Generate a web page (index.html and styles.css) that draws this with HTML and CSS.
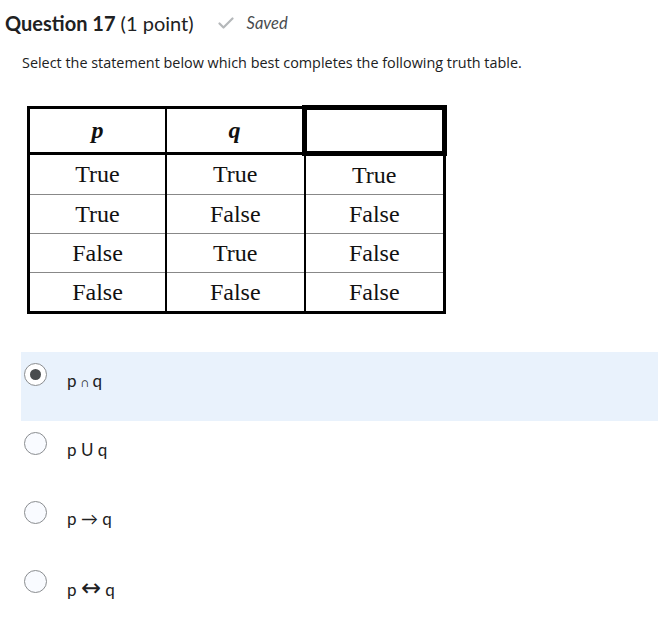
FILE: index.html
```html
<!DOCTYPE html>
<html lang="en">
<head>
<meta charset="utf-8">
<title>Question 17</title>
<link rel="stylesheet" href="styles.css">
</head>
<body>
<div class="page">
  <header class="qhead">
    <h1 class="qtitle"><span class="qnum">Question 17</span> <span class="qpts">(1 point)</span></h1>
    <span class="saved">
      <svg class="check" width="16" height="12" viewBox="0 0 16 12" aria-hidden="true"><path d="M1.5 6.5 L5.5 10.5 L14.5 1.5" fill="none" stroke="#b5b8ba" stroke-width="2.2" stroke-linecap="round" stroke-linejoin="round"/></svg>
      <span class="saved-text">Saved</span>
    </span>
  </header>
  <p class="prompt">Select the statement below which best completes the following truth table.</p>
  <table class="truth">
    <thead>
      <tr><th>p</th><th>q</th><th class="blank"></th></tr>
    </thead>
    <tbody>
      <tr><td>True</td><td>True</td><td>True</td></tr>
      <tr><td>True</td><td>False</td><td>False</td></tr>
      <tr><td>False</td><td>True</td><td>False</td></tr>
      <tr><td>False</td><td>False</td><td>False</td></tr>
    </tbody>
  </table>
  <ul class="options">
    <li class="option selected"><span class="radio"></span><span class="label">p <span class="small">∩</span> q</span></li>
    <li class="option"><span class="radio"></span><span class="label">p U q</span></li>
    <li class="option"><span class="radio"></span><span class="label">p → q</span></li>
    <li class="option"><span class="radio"></span><span class="label">p <span class="arrow">↔</span> q</span></li>
  </ul>
</div>
</body>
</html>
```
FILE: styles.css
```css
html, body {
  margin: 0;
  padding: 0;
  background: #ffffff;
}
.page {
  font-family: Lato, "Noto Sans", sans-serif;
  color: #202122;
}
.qhead {
  display: flex;
  align-items: center;
  padding: 10px 0 0 5px;
  height: 26px;
}
.qtitle {
  margin: 0;
  font-size: 20px;
  font-weight: 400;
  color: #202122;
  line-height: 26px;
}
.qnum {
  font-weight: 700;
}
.saved {
  display: flex;
  align-items: center;
  margin-left: 24px;
}
.check {
  display: block;
}
.saved-text {
  margin-left: 13px;
  font-style: italic;
  font-size: 16.5px;
  color: #494c4e;
}
.prompt {
  margin: 17px 0 0 22px;
  font-family: "Open Sans", Lato, sans-serif;
  font-size: 14.4px;
  line-height: 20px;
  color: #202122;
}
.truth {
  margin: 32px 0 0 27px;
  border-collapse: collapse;
  border: 3px solid #000;
  font-family: "Liberation Serif", "Times New Roman", serif;
  font-size: 24px;
  color: #111;
}
.truth th,
.truth td {
  width: 135px;
  text-align: center;
  padding: 0;
  border-left: 2px solid #000;
  border-right: 2px solid #000;
}
.truth th {
  height: 41px;
  font-weight: 700;
  font-style: italic;
  border-bottom: 3px solid #000;
}
.truth th.blank {
  border: 5px solid #000;
}
.truth td {
  height: 38px;
  border-top: 1px solid #888;
}
.options {
  list-style: none;
  margin: 38px 0 0 21px;
  padding: 0;
}
.option {
  display: flex;
  align-items: flex-start;
  height: 69px;
  padding: 0 0 0 3px;
  box-sizing: border-box;
}
.option.selected {
  background: #e9f2fc;
}
.radio {
  position: relative;
  width: 21px;
  height: 21px;
  margin-top: 11px;
  border: 1px solid #8a8d90;
  border-radius: 50%;
  background: #f9fbff;
  flex: none;
}
.option.selected .radio {
  background: #ffffff;
}
.option.selected .radio::after {
  content: "";
  position: absolute;
  left: 5px;
  top: 5px;
  width: 11px;
  height: 11px;
  border-radius: 50%;
  background: #494c4e;
}
.label {
  margin: 19px 0 0 20px;
  font-size: 17px;
  line-height: 20px;
  color: #202122;
}
.small {
  font-size: 12px;
}
.arrow {
  font-family: "Noto Sans", "DejaVu Sans", sans-serif;
  font-size: 24px;
  line-height: 18px;
}
```
